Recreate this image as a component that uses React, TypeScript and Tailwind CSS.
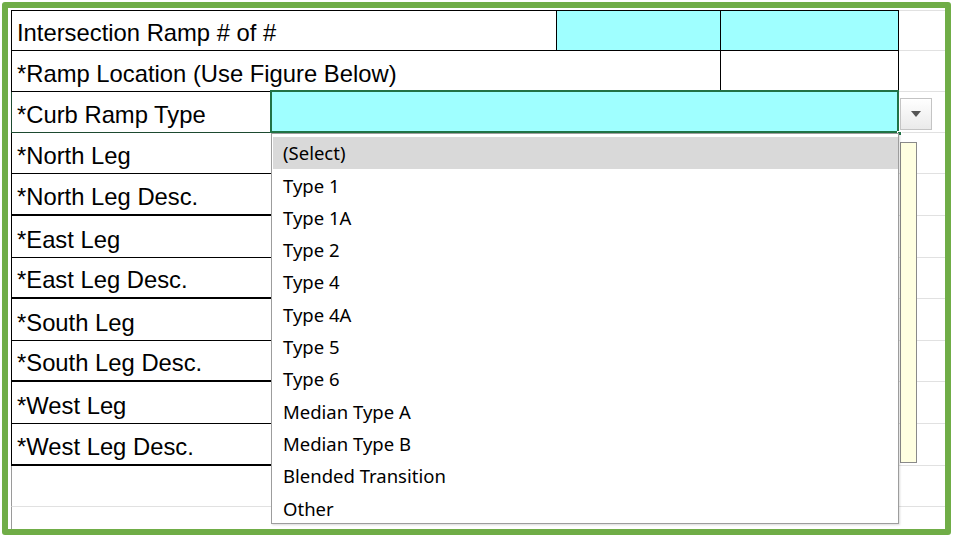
const legRows = [
  { label: "*North Leg", h: "h-[41px]", thick: false },
  { label: "*North Leg Desc.", h: "h-[42px]", thick: true },
  { label: "*East Leg", h: "h-[42px]", thick: false },
  { label: "*East Leg Desc.", h: "h-[41px]", thick: true },
  { label: "*South Leg", h: "h-[42px]", thick: false },
  { label: "*South Leg Desc.", h: "h-[41px]", thick: true },
  { label: "*West Leg", h: "h-[42px]", thick: false },
  { label: "*West Leg Desc.", h: "h-[42px]", thick: true },
];

const options = [
  "(Select)",
  "Type 1",
  "Type 1A",
  "Type 2",
  "Type 4",
  "Type 4A",
  "Type 5",
  "Type 6",
  "Median Type A",
  "Median Type B",
  "Blended Transition",
  "Other",
];

const labelText = "flex items-end pl-[5px] pb-[5px] leading-none text-[23.8px] text-black whitespace-nowrap";

export default function App() {
  return (
    <div className="w-[953px] h-[537px] bg-white p-[2px] font-['Liberation_Sans',Arial,sans-serif]">
      <div className="relative h-full overflow-hidden rounded-[3px] border-[6px] border-[#70ad47] bg-white pt-[2px] pl-[3px]">
        {/* row 1 */}
        <div className="flex h-[41px]">
          <div className={`w-[546px] border border-black ${labelText}`}>Intersection Ramp # of #</div>
          <div className="w-[164px] border-y border-r border-black bg-[#9fffff]" />
          <div className="w-[178px] border-y border-r border-black bg-[#9fffff]" />
          <div className="flex-1 border-y border-[#e1e1e1]" />
        </div>

        {/* row 2 */}
        <div className="flex h-[41px]">
          <div className={`w-[710px] border-x border-b border-black ${labelText}`}>*Ramp Location (Use Figure Below)</div>
          <div className="w-[178px] border-b border-r border-black" />
          <div className="flex-1 border-b border-[#e1e1e1]" />
        </div>

        {/* row 3 - selected */}
        <div className="flex h-[41px]">
          <div className={`w-[261px] border-x border-b border-[#1d4a30] ${labelText}`}>*Curb Ramp Type</div>
          <div className="relative w-[627px] bg-[#9fffff]">
            <div className="absolute -top-[2px] -left-[2px] right-0 bottom-0 border-2 border-[#217346]" />
            <div className="absolute -right-[3px] -bottom-[3px] h-[5px] w-[5px] bg-[#217346] border border-white" />
          </div>
          <div className="flex-1 border-b border-[#e1e1e1]" />
        </div>

        {legRows.map((r) => (
          <div key={r.label} className={`flex ${r.h}`}>
            <div className={`w-[261px] border-x border-black ${r.thick ? "border-b-2" : "border-b"} ${labelText}`}>{r.label}</div>
            <div className="flex-1 border-b border-[#e1e1e1]" />
          </div>
        ))}

        <div className="flex h-[41px]">
          <div className="w-[261px] border-l border-b border-l-[#9a9a9a] border-b-[#e1e1e1]" />
          <div className="flex-1 border-b border-[#e1e1e1]" />
        </div>
        <div className="flex h-[41px]">
          <div className="w-[261px] border-l border-[#9a9a9a]" />
          <div className="flex-1" />
        </div>

        {/* dropdown arrow button */}
        <div className="absolute left-[892px] top-[90px] flex h-[32px] w-[32px] items-center justify-center border border-[#c4c4c4] bg-gradient-to-b from-white to-[#eaeaea]">
          <svg width="10" height="6" viewBox="0 0 10 6">
            <path d="M0 0 H10 L5 6 Z" fill="#555" />
          </svg>
        </div>

        {/* comment box */}
        <div className="absolute left-[892px] top-[134px] h-[321px] w-[17px] border border-[#8a8a8a] bg-[#ffffe1]" />

        {/* dropdown list */}
        <div className="absolute left-[263px] top-[125px] h-[391px] w-[628px] border border-[#9d9d9d] bg-white pt-[3px] pl-[1px] font-['Noto_Sans','Open_Sans',sans-serif] text-[18.5px] text-black shadow-[1px_1px_2px_rgba(0,0,0,0.15)]">
          {options.map((o, i) => (
            <div key={o} className={`flex h-[32.3px] items-center pl-[10px] ${i === 0 ? "bg-[#d9d9d9]" : ""}`}>
              {o}
            </div>
          ))}
        </div>
      </div>
    </div>
  );
}
